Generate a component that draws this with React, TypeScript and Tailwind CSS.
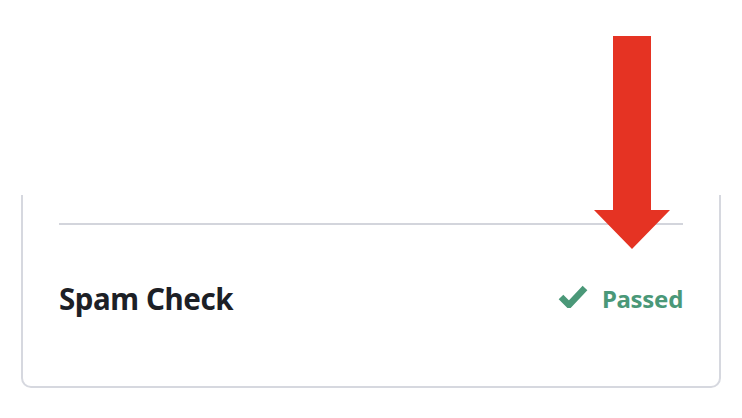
export default function App() {
  return (
    <div className="relative h-[418px] w-[742px] overflow-hidden bg-white" style={{ fontFamily: '"Noto Sans", "Open Sans", sans-serif' }}>
      <div className="px-[21px] pt-[195px]">
        <div className="h-[193px] rounded-b-[10px] border-x-2 border-b-2 border-[#d6d8df] px-[36px] pt-[28px]">
          <div className="h-[2px] bg-[#d3d5dc]" />
          <div className="flex items-center justify-between pt-[59px]">
            <span className="text-[29.5px] font-bold leading-none tracking-[-0.4px] text-[#1c2026]">Spam Check</span>
            <span className="flex items-center gap-[14px] text-[#4a9878]">
              <svg width="30" height="24" viewBox="0 0 30 24" className="-mt-[6px]">
                <path d="M3 13 L11 21 L27 4" fill="none" stroke="currentColor" strokeWidth="6.5" strokeLinecap="butt" strokeLinejoin="miter" />
              </svg>
              <span className="text-[24px] font-bold leading-none tracking-[-0.3px]">Passed</span>
            </span>
          </div>
        </div>
      </div>

      {/* red pointer arrow */}
      <svg className="absolute left-[594px] top-[36px]" width="76" height="213" viewBox="0 0 76 213">
        <path d="M19 0 H57 V174 H76 L38 213 L0 174 H19 Z" fill="#e53323" />
      </svg>
    </div>
  );
}
